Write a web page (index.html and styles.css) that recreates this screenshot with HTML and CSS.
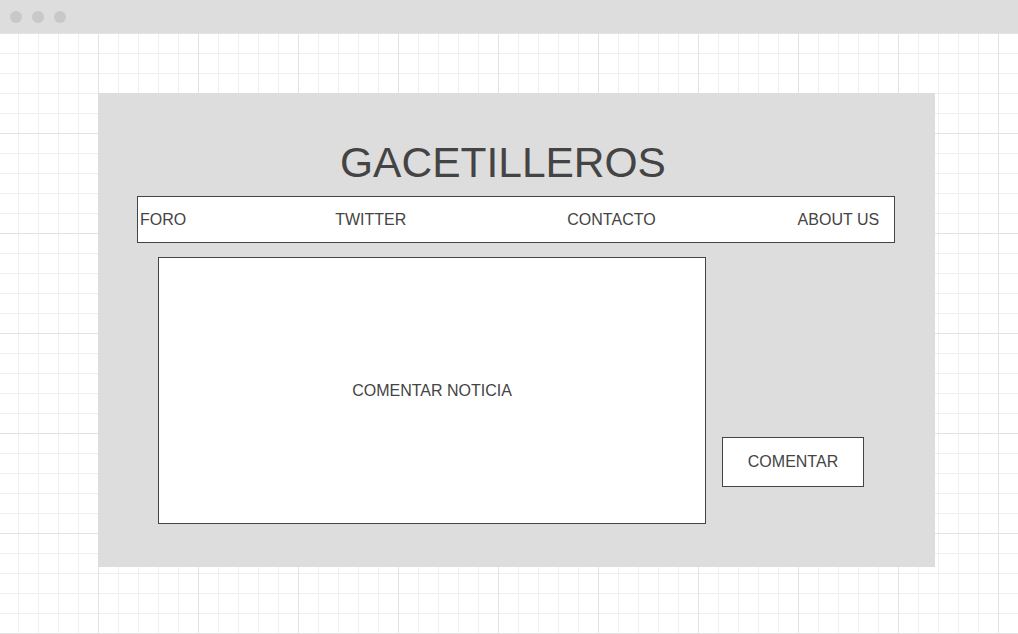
FILE: index.html
```html
<!DOCTYPE html>
<html lang="es">
<head>
<meta charset="utf-8">
<title>Gacetilleros</title>
<link rel="stylesheet" href="styles.css">
</head>
<body>
<div class="topbar">
  <span class="dot"></span><span class="dot"></span><span class="dot"></span>
</div>
<main class="panel">
  <h1 class="title">GACETILLEROS</h1>
  <nav class="nav">
    <span class="nav-item foro">FORO</span>
    <span class="nav-item twitter">TWITTER</span>
    <span class="nav-item contacto">CONTACTO</span>
    <span class="nav-item about">ABOUT US</span>
  </nav>
  <section class="content">
    <div class="comment-box">COMENTAR NOTICIA</div>
    <button class="comment-btn">COMENTAR</button>
  </section>
</main>
</body>
</html>
```

FILE: styles.css
```css
html, body {
  margin: 0;
  padding: 0;
}
body {
  width: 1018px;
  height: 634px;
  overflow: hidden;
  font-family: "Liberation Sans", Arial, sans-serif;
  color: #444;
  background-color: #ffffff;
  background-image:
    linear-gradient(to right, #e3e3e3 1px, transparent 1px),
    linear-gradient(to bottom, #e3e3e3 1px, transparent 1px),
    linear-gradient(to right, #efefef 1px, transparent 1px),
    linear-gradient(to bottom, #efefef 1px, transparent 1px);
  background-size: 100px 100px, 100px 100px, 20px 20px, 20px 20px;
  background-position: 98px 33px, 98px 33px, 18px 33px, 18px 33px;
}
.topbar {
  height: 33px;
  background: #dddddd;
  display: flex;
  align-items: center;
  gap: 10px;
  padding-left: 10px;
  box-sizing: border-box;
}
.dot {
  width: 12px;
  height: 12px;
  border-radius: 50%;
  background: #c8c8c8;
}
.panel {
  margin: 60px 0 0 98px;
  width: 837px;
  height: 474px;
  background: #dddddd;
  padding-top: 46px;
  box-sizing: border-box;
  display: flex;
  flex-direction: column;
}
.title {
  margin: 0 27px 0 0;
  font-size: 42.5px;
  line-height: 48px;
  font-weight: normal;
  text-align: center;
  color: #444;
}
.nav {
  margin: 9px 0 0 39px;
  width: 758px;
  height: 47px;
  box-sizing: border-box;
  border: 1px solid #444;
  background: #fff;
  display: flex;
  align-items: center;
  font-size: 16px;
}
.nav-item {
  white-space: nowrap;
}
.foro { margin-left: 2px; }
.twitter { margin-left: 149px; }
.contacto { margin-left: 161px; }
.about { margin-left: 142px; }
.content {
  margin: 14px 0 0 60px;
  display: flex;
  align-items: flex-start;
  gap: 16px;
}
.comment-box {
  width: 548px;
  height: 267px;
  box-sizing: border-box;
  border: 1px solid #444;
  background: #fff;
  display: flex;
  align-items: center;
  justify-content: center;
  font-size: 16px;
}
.comment-btn {
  margin-top: 180px;
  width: 142px;
  height: 50px;
  box-sizing: border-box;
  border: 1px solid #444;
  border-radius: 0;
  background: #fff;
  color: #444;
  font-family: "Liberation Sans", Arial, sans-serif;
  font-size: 16px;
  padding: 0;
}
```
